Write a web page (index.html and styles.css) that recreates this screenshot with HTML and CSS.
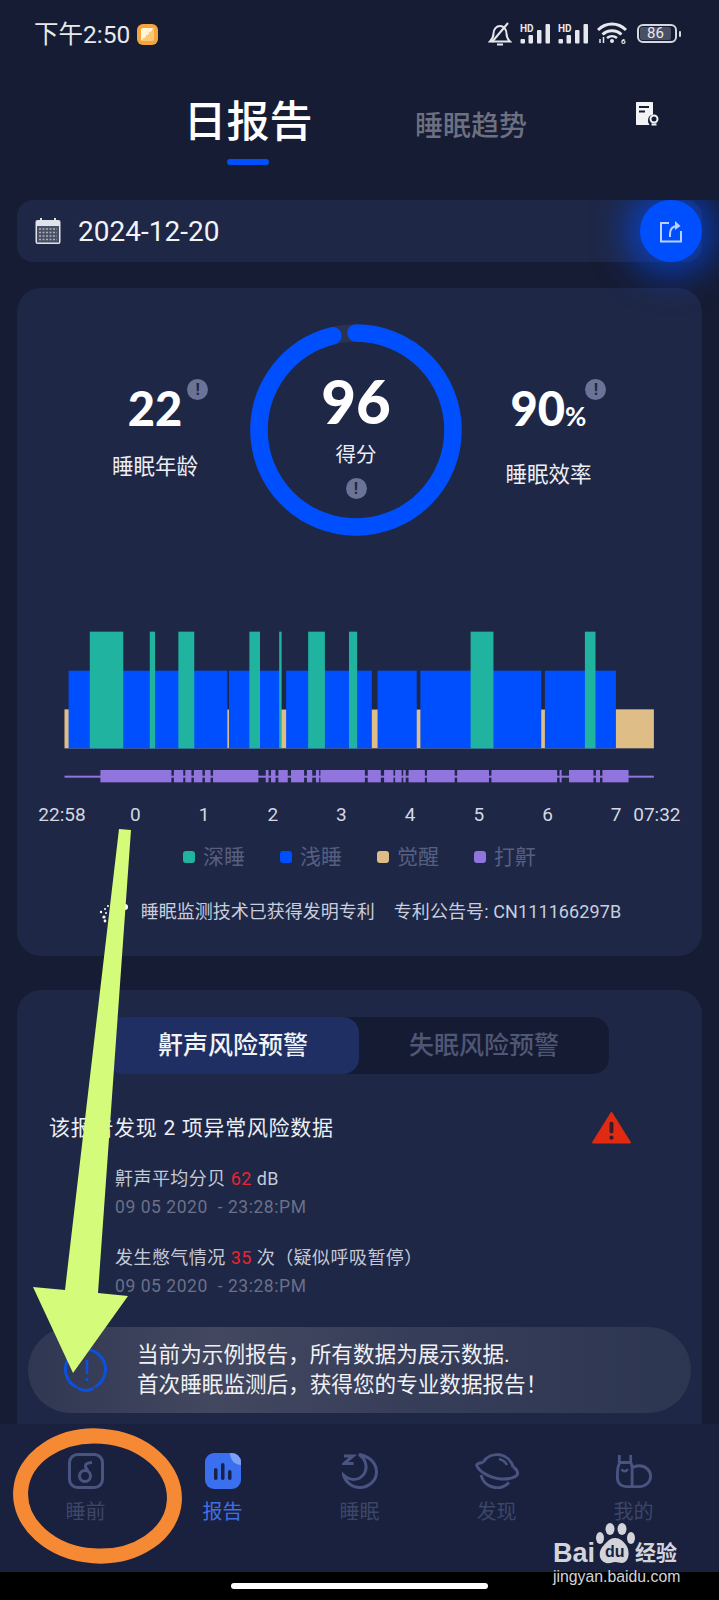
FILE: index.html
```html
<!DOCTYPE html>
<html lang="zh-CN">
<head>
    <meta charset="UTF-8">
    <meta name="viewport" content="width=device-width, initial-scale=1.0">
    <title>日报告</title>
    <link rel="stylesheet" href="styles.css">
</head>
<body>
    <div class="screen">
        <!-- Status bar -->
        <div class="status-bar">
            <div class="status-left">
                <span class="status-time">下午2:50</span>
                <span class="app-dot"><span class="app-dot-fold"></span></span>
            </div>
            <div class="status-right">
                <svg class="bell-icon" viewBox="0 0 24 24" fill="none" stroke="#e6e8ee" stroke-width="2">
                    <path d="M2 19.500h20c-2.500-2.500-3.500-4-3.500-8 0-4.500-3-7.500-6.500-7.500s-6.500 3-6.500 7.500c0 4-1 5.500-3.500 8z"/>
                    <path d="M9 22.500h6"/>
                    <path d="M20 1L4 20"/>
                </svg>
                <svg class="signal-icon" viewBox="0 0 31 21">
                    <text x="0" y="8.500" class="hd-text">HD</text>
                    <rect x="0.500" y="16" width="4.500" height="4.500" rx="1"/>
                    <rect x="8.500" y="12" width="4.500" height="8.500" rx="1"/>
                    <rect x="17" y="7" width="4.500" height="13.500" rx="1"/>
                    <rect x="25.500" y="1" width="4.500" height="19.500" rx="1"/>
                </svg>
                <svg class="signal-icon" viewBox="0 0 31 21">
                    <text x="0" y="8.500" class="hd-text">HD</text>
                    <rect x="0.500" y="16" width="4.500" height="4.500" rx="1"/>
                    <rect x="8.500" y="12" width="4.500" height="8.500" rx="1"/>
                    <rect x="17" y="7" width="4.500" height="13.500" rx="1"/>
                    <rect x="25.500" y="1" width="4.500" height="19.500" rx="1"/>
                </svg>
                <svg class="wifi-icon" viewBox="0 0 30 22" fill="none" stroke="#e6e8ee" stroke-width="3">
                    <path d="M1 8c8-8 20-8 28 0"/>
                    <path d="M5.500 12.500c5.500-5 13.500-5 19 0"/>
                    <path d="M10 16c3-2.500 7-2.500 10 0" stroke-width="2.500"/>
                    <circle cx="15" cy="19" r="2" fill="#e6e8ee" stroke="none"/>
                    <path d="M3 21v-4M6.500 21v-6" stroke-width="1.500"/>
                    <text x="24" y="21.500" class="wifi-six">6</text>
                </svg>
                <div class="battery">
                    <div class="battery-body"><span class="battery-level">86</span></div>
                    <span class="battery-nub"></span>
                </div>
            </div>
        </div>

        <!-- Page tabs -->
        <header class="page-tabs">
            <div class="page-tab-active">
                <h1>日报告</h1>
                <span class="tab-line"></span>
            </div>
            <div class="page-tab">睡眠趋势</div>
            <svg class="report-icon" viewBox="0 0 24 24">
                <path d="M1 0h15c.600 0 1 .400 1 1v11.500c-3 .500-5 2.500-5 5.500 0 2 .500 3.500 1.500 5H1c-.600 0-1-.400-1-1V1c0-.600.400-1 1-1z" fill="#f2f3f6"/>
                <rect x="3" y="4" width="10" height="2" fill="#161c33"/>
                <rect x="3" y="8.500" width="6" height="2" fill="#161c33"/>
                <circle cx="18" cy="17" r="3.500" fill="none" stroke="#f2f3f6" stroke-width="2"/>
                <rect x="15.500" y="21.500" width="5" height="2" fill="#f2f3f6"/>
            </svg>
        </header>

        <main class="content">
            <!-- Date bar -->
            <div class="date-bar">
                <svg class="calendar-icon" viewBox="0 0 26 26">
                    <rect x="0.500" y="2" width="25" height="24" rx="2" fill="#dfe2ea"/>
                    <rect x="2" y="8" width="22" height="16.500" fill="#4a5063"/>
                    <rect x="5" y="0" width="2" height="4" fill="#dfe2ea"/>
                    <rect x="19" y="0" width="2" height="4" fill="#dfe2ea"/>
                    <path d="M4 11h18M4 14.500h18M4 18h18M4 21.500h18" stroke="#a9aebd" stroke-width="1.500" stroke-dasharray="2 1.500"/>
                </svg>
                <span class="date-text">2024-12-20</span>
                <div class="share-btn">
                    <svg viewBox="0 0 24 24" fill="none" stroke="#bcd0ff" stroke-width="2">
                        <path d="M10 4H2v18.500h20V12"/>
                        <path d="M11 18v-3c0-5 3-8 8-8" />
                        <path d="M16 2l5.500 5-5.500 4" fill="#bcd0ff" stroke="none"/>
                    </svg>
                </div>
            </div>

            <!-- Score card -->
            <section class="card score-card">
                <div class="score-row">
                    <div class="stat">
                        <div class="stat-value">22<span class="info-badge stat-badge">!</span></div>
                        <div class="stat-label">睡眠年龄</div>
                    </div>
                    <div class="ring">
                        <svg viewBox="0 0 212 212" fill="none" stroke-width="17.500">
                            <circle cx="106" cy="106" r="97" stroke="#2a3450"/>
                            <circle cx="106" cy="106" r="97" stroke="#004fff" stroke-linecap="round" stroke-dasharray="585 610" transform="rotate(-90 106 106)"/>
                        </svg>
                        <div class="ring-text">
                            <div class="ring-score">96</div>
                            <div class="ring-label">得分</div>
                            <span class="info-badge">!</span>
                        </div>
                    </div>
                    <div class="stat">
                        <div class="stat-value">90<small>%</small><span class="info-badge stat-badge badge-right">!</span></div>
                        <div class="stat-label">睡眠效率</div>
                    </div>
                </div>

                <svg class="sleep-chart" viewBox="0 0 1568 495" preserveAspectRatio="none">
                    <g fill="#dfbd86">
                        <rect x="60" y="268" width="1444" height="117"/>
                    </g>
                    <g fill="#1e2746">
                        <rect x="70" y="152" width="1341" height="116"/>
                    </g>
                    <g fill="#004fff">
                        <rect x="70" y="152" width="389" height="233"/>
                        <rect x="463" y="152" width="127" height="233"/>
                        <rect x="603" y="152" width="210" height="233"/>
                        <rect x="827" y="152" width="96" height="233"/>
                        <rect x="932" y="152" width="296" height="233"/>
                        <rect x="1237" y="152" width="174" height="233"/>
                    </g>
                    <g fill="#1fb3a0">
                        <rect x="122" y="35" width="82" height="350"/>
                        <rect x="269" y="35" width="13" height="350"/>
                        <rect x="339" y="35" width="39" height="350"/>
                        <rect x="513" y="35" width="26" height="350"/>
                        <rect x="586" y="35" width="6" height="350"/>
                        <rect x="657" y="35" width="41" height="350"/>
                        <rect x="757" y="35" width="20" height="350"/>
                        <rect x="1055" y="35" width="56" height="350"/>
                        <rect x="1335" y="35" width="26" height="350"/>
                    </g>
                    <g fill="#9274de">
                        <rect x="60" y="467" width="1444" height="6"/>
                        <rect x="148" y="450" width="174" height="37"/>
                        <rect x="328" y="450" width="23" height="37"/>
                        <rect x="356" y="450" width="15" height="37"/>
                        <rect x="377" y="450" width="21" height="37"/>
                        <rect x="404" y="450" width="14" height="37"/>
                        <rect x="424" y="450" width="111" height="37"/>
                        <rect x="553" y="450" width="7" height="37"/>
                        <rect x="566" y="450" width="11" height="37"/>
                        <rect x="584" y="450" width="23" height="37"/>
                        <rect x="615" y="450" width="32" height="37"/>
                        <rect x="654" y="450" width="13" height="37"/>
                        <rect x="676" y="450" width="8" height="37"/>
                        <rect x="687" y="450" width="109" height="37"/>
                        <rect x="803" y="450" width="32" height="37"/>
                        <rect x="843" y="450" width="23" height="37"/>
                        <rect x="870" y="450" width="16" height="37"/>
                        <rect x="890" y="450" width="6" height="37"/>
                        <rect x="903" y="450" width="40" height="37"/>
                        <rect x="948" y="450" width="68" height="37"/>
                        <rect x="1022" y="450" width="78" height="37"/>
                        <rect x="1106" y="450" width="161" height="37"/>
                        <rect x="1273" y="450" width="5" height="37"/>
                        <rect x="1296" y="450" width="60" height="37"/>
                        <rect x="1362" y="450" width="10" height="37"/>
                        <rect x="1378" y="450" width="64" height="37"/>
                    </g>
                </svg>

                <div class="axis">
                    <span class="axis-start">22:58</span>
                    <span class="axis-tick">0</span>
                    <span class="axis-tick">1</span>
                    <span class="axis-tick">2</span>
                    <span class="axis-tick">3</span>
                    <span class="axis-tick">4</span>
                    <span class="axis-tick">5</span>
                    <span class="axis-tick">6</span>
                    <span class="axis-tick">7</span>
                    <span class="axis-end">07:32</span>
                </div>

                <div class="legend">
                    <div class="legend-item"><i class="swatch deep"></i>深睡</div>
                    <div class="legend-item"><i class="swatch light"></i>浅睡</div>
                    <div class="legend-item"><i class="swatch awake"></i>觉醒</div>
                    <div class="legend-item"><i class="swatch snore"></i>打鼾</div>
                </div>

                <div class="patent">
                    <svg class="spinner" viewBox="0 0 30 22" fill="#fff">
                        <circle cx="27" cy="6" r="3"/>
                        <circle cx="14" cy="4" r="1"/>
                        <circle cx="10" cy="5" r="1"/>
                        <circle cx="7" cy="8" r="1"/>
                        <circle cx="3" cy="11" r="1.200"/>
                        <circle cx="8" cy="12" r="1"/>
                        <circle cx="6" cy="16" r="1.600"/>
                        <circle cx="12" cy="15" r="1"/>
                        <circle cx="7" cy="20" r="1.400"/>
                    </svg>
                    <span>睡眠监测技术已获得发明专利</span>
                    <span class="patent-no">专利公告号: CN111166297B</span>
                </div>
            </section>

            <!-- Risk card, runs under the tab bar -->
            <section class="card risk-card">
                <div class="risk-tabs">
                    <div class="risk-tab active">鼾声风险预警</div>
                    <div class="risk-tab">失眠风险预警</div>
                </div>
                <div class="risk-head">
                    <span class="risk-summary">该报告发现 2 项异常风险数据</span>
                    <svg class="warn-icon" viewBox="0 0 40 33">
                        <path d="M20 1L39 31.500H1z" fill="#e02a12" stroke="#e02a12" stroke-width="2" stroke-linejoin="round"/>
                        <rect x="18" y="10" width="4" height="12" rx="2" fill="#3a1a2a"/>
                        <circle cx="20" cy="26.500" r="2.200" fill="#3a1a2a"/>
                    </svg>
                </div>
                <div class="risk-item">
                    <p class="risk-title">鼾声平均分贝 <em>62</em> dB</p>
                    <p class="risk-time">09 05 2020&nbsp; - 23:28:PM</p>
                </div>
                <div class="risk-item">
                    <p class="risk-title">发生憋气情况 <em>35</em> 次（疑似呼吸暂停）</p>
                    <p class="risk-time">09 05 2020&nbsp; - 23:28:PM</p>
                </div>
            </section>
        </main>

        <!-- Bottom navigation -->
        <nav class="tab-bar">
            <div class="tab-item">
                <svg viewBox="0 0 36 36" fill="none" stroke="#4a5480" stroke-width="3">
                    <rect x="1.500" y="1.500" width="33" height="33" rx="8"/>
                    <circle cx="17" cy="23" r="5.500"/>
                    <path d="M20 18C17 14 15 10 24 9.500"/>
                </svg>
                <span>睡前</span>
            </div>
            <div class="tab-item current">
                <svg viewBox="0 0 36 36">
                    <rect width="36" height="36" rx="9" fill="#3a6ff0"/>
                    <path d="M25 0h2a9 9 0 0 1 9 9v3c-6 0-11-5-11-12z" fill="#7d9ff5"/>
                    <rect x="9" y="15" width="3.500" height="12" rx="1.700" fill="#16224a"/>
                    <rect x="16" y="10" width="3.500" height="17" rx="1.700" fill="#16224a"/>
                    <rect x="23" y="17" width="3.500" height="10" rx="1.700" fill="#16224a"/>
                </svg>
                <span>报告</span>
            </div>
            <div class="tab-item">
                <svg viewBox="0 0 36 36" fill="none" stroke="#4a5480" stroke-width="3">
                    <path d="M17 1.500C27 3 34.500 10 34.500 19 34.500 27.500 27 34.500 18 34.500 10 34.500 3.500 29 1.500 22 8 28 17 28 22 21 26 15 24 6 17 1.500z"/>
                    <path d="M2 3h9L2 10.500h9.500"/>
                </svg>
                <span>睡眠</span>
            </div>
            <div class="tab-item">
                <svg class="planet" viewBox="0 0 44 36" fill="none" stroke="#4a5480" stroke-width="3">
                    <path d="M8 9.500A16.500 16.500 0 0 1 38 14"/>
                    <path d="M8 9.500C3 10 1 11 2 13C4 18 14 25 26 26C34 26.500 42 24 42.500 21C43 19 41 15 38 14"/>
                    <path d="M6 22A16.500 16.500 0 0 0 34 29.500"/>
                    <path d="M24 6c4 1 6.500 3 8 6" stroke-width="2.500"/>
                </svg>
                <span>发现</span>
            </div>
            <div class="tab-item">
                <svg viewBox="0 0 38 36" fill="none" stroke="#4a5480" stroke-width="3">
                    <path d="M3.500 1v9C2 13 1.500 16 1.500 20v5c0 6 4 9.500 9 9.500h14c7 0 12-5 12-11s-5-11-12-11c-2 0-5 .500-7.500 2"/>
                    <path d="M15.500 1v8"/>
                    <path d="M3.500 9h12c1 2 1.500 3 1.500 5v20.500"/>
                    <path d="M6 16c1 3 5 3 6.500 0" stroke-width="2.500"/>
                </svg>
                <span>我的</span>
            </div>
        </nav>
        <div class="home-bar"><span></span></div>

        <!-- Notice floats over the risk card -->
        <div class="notice">
            <svg class="notice-icon" viewBox="0 0 46 46" fill="none" stroke="#0c50e0" stroke-width="3">
                <path d="M31 40A20 20 0 1 0 13 40.500"/>
                <path d="M14 41c5 3 11 3 16 0" stroke-width="3"/>
                <path d="M23 13v14M23 31v3" stroke-width="2.500"/>
            </svg>
            <p>当前为示例报告，所有数据为展示数据.<br>首次睡眠监测后，获得您的专业数据报告！</p>
        </div>

        <!-- Annotations drawn on top of the screenshot -->
        <svg class="annotations" viewBox="0 0 719 1600">
            <polygon points="119,829 131,830 98,1293 128,1296 73,1373 33,1287 65,1290" fill="#d4fb79"/>
            <ellipse cx="97.500" cy="1496" rx="77" ry="60" fill="none" stroke="#f68a34" stroke-width="15" transform="rotate(4 97.500 1496)"/>
        </svg>

        <!-- Watermark -->
        <div class="watermark">
            <div class="wm-top">
                <span class="wm-bai">Bai</span>
                <div class="wm-paw">
                    <svg viewBox="0 0 40 44" fill="#d3d4da">
                        <ellipse cx="5" cy="15" rx="4" ry="6"/>
                        <ellipse cx="15" cy="6" rx="4.500" ry="6"/>
                        <ellipse cx="27" cy="6" rx="4.500" ry="6"/>
                        <ellipse cx="36" cy="15" rx="4" ry="6"/>
                        <path d="M20 15c5 0 8 3 11 7 4 5 4 17-4 18-3 0-4-1-7-1s-5 2-9 1c-8-2-8-13-2-18 4-4 6-7 11-7z"/>
                    </svg>
                    <span>du</span>
                </div>
                <span class="wm-jy">经验</span>
            </div>
            <div class="wm-url">jingyan.baidu.com</div>
        </div>
    </div>
</body>
</html>
```

FILE: styles.css
```css
* {
    margin: 0;
    padding: 0;
    box-sizing: border-box;
    font-family: 'Roboto', 'Noto Sans CJK SC', sans-serif;
}
body {
    background-color: #000;
}
.screen {
    position: relative;
    width: 719px;
    height: 1600px;
    overflow: hidden;
    background-color: #161c33;
    display: flex;
    flex-direction: column;
    color: #fff;
}

/* status bar */
.status-bar {
    height: 66px;
    flex: none;
    display: flex;
    justify-content: space-between;
    padding: 19px 38px 0 34px;
}
.status-left {
    display: flex;
    align-items: flex-start;
    gap: 7px;
    margin-top: 2px;
}
.status-time {
    font-size: 24.5px;
    line-height: 28px;
    color: #e8e9ee;
}
.app-dot {
    width: 21px;
    height: 21px;
    margin-top: 3px;
    border-radius: 6px;
    background-color: #f4a53c;
    display: block;
    padding: 4px;
}
.app-dot-fold {
    display: block;
    width: 13px;
    height: 13px;
    border-radius: 2px;
    background: linear-gradient(135deg, #fff3d8 50%, #f9c977 50%);
}
.status-right {
    display: flex;
    align-items: flex-start;
    height: 28px;
}
.bell-icon {
    width: 24px;
    height: 24px;
    margin: 3px 8px 0 0;
}
.signal-icon {
    width: 31px;
    height: 21px;
    margin: 4px 7px 0 0;
    fill: #e6e8ee;
}
.hd-text {
    font-size: 10px;
    font-weight: 700;
}
.wifi-icon {
    width: 30px;
    height: 22px;
    margin: 3px 10px 0 1px;
}
.wifi-six {
    font-size: 8px;
    font-weight: 700;
    fill: #e6e8ee;
    stroke: none;
}
.battery {
    display: flex;
    align-items: center;
    gap: 2px;
    height: 19px;
    margin-top: 5px;
}
.battery-body {
    width: 40px;
    height: 19px;
    border: 2px solid #d6d8e0;
    border-radius: 6px;
    padding: 1px;
}
.battery-level {
    display: block;
    width: 31px;
    height: 13px;
    background-color: #4a4f63;
    border-radius: 2px;
    font-size: 15px;
    line-height: 13px;
    text-align: center;
    color: #e8e9ee;
}
.battery-nub {
    width: 2px;
    height: 6px;
    border-radius: 1px;
    background-color: #d6d8e0;
}

/* page tabs */
.page-tabs {
    position: relative;
    height: 134px;
    flex: none;
    display: flex;
    padding-left: 185px;
}
.page-tab-active {
    width: 126px;
    padding-top: 31px;
    display: flex;
    flex-direction: column;
    align-items: center;
}
.page-tab-active h1 {
    font-size: 43px;
    font-weight: 500;
    line-height: 50px;
    white-space: nowrap;
}
.tab-line {
    width: 42px;
    height: 6px;
    margin-top: 12px;
    border-radius: 3px;
    background-color: #004fff;
}
.page-tab {
    margin: 43px 0 0 104px;
    font-size: 28px;
    font-weight: 500;
    line-height: 36px;
    color: #6c7080;
}
.report-icon {
    position: absolute;
    left: 636px;
    top: 36px;
    width: 24px;
    height: 24px;
}

/* content */
.content {
    flex: 1;
    min-height: 0;
    overflow: hidden;
    padding: 0 17px;
}
.date-bar {
    height: 62px;
    display: flex;
    align-items: center;
    border-radius: 16px;
    background-color: #1e2746;
    padding-left: 18px;
}
.calendar-icon {
    width: 26px;
    height: 26px;
}
.date-text {
    margin-left: 17px;
    font-size: 28px;
    color: #f2f3f6;
}
.share-btn {
    margin-left: auto;
    width: 62px;
    height: 62px;
    border-radius: 50%;
    background-color: #004fff;
    box-shadow: 0 0 34px 14px rgba(0, 79, 255, 0.6);
    display: flex;
    align-items: center;
    justify-content: center;
}
.share-btn svg {
    width: 24px;
    height: 24px;
}
.card {
    border-radius: 24px;
    background-color: #1e2746;
}
.score-card {
    margin-top: 26px;
    padding: 36px 0 32px;
    overflow: hidden;
}
.score-row {
    display: grid;
    grid-template-columns: 190px 212px 173px;
    padding-left: 43px;
}
.stat {
    padding-top: 61px;
    text-align: center;
}
.stat-value {
    position: relative;
    display: inline-block;
    font-family: 'Lato', sans-serif;
    font-size: 47px;
    font-weight: 900;
    line-height: 46px;
}
.stat-value small {
    font-family: 'Lato', sans-serif;
    font-size: 26px;
    font-weight: 700;
}
.stat-label {
    margin-top: 24px;
    font-size: 21.5px;
    line-height: 24px;
    color: #eceef3;
}
.info-badge {
    display: block;
    width: 21px;
    height: 21px;
    border-radius: 50%;
    background-color: #6b7396;
    color: #1e2746;
    font-family: 'Roboto', sans-serif;
    font-size: 16px;
    font-weight: 700;
    line-height: 21px;
    text-align: center;
}
.stat-badge {
    position: absolute;
    right: -26px;
    top: -6px;
}
.badge-right {
    right: -20px;
}
.ring {
    position: relative;
    width: 212px;
    height: 212px;
}
.ring svg {
    display: block;
    width: 212px;
    height: 212px;
}
.ring-text {
    position: absolute;
    inset: 0;
    padding-top: 47px;
    display: flex;
    flex-direction: column;
    align-items: center;
}
.ring-score {
    font-family: 'Lato', sans-serif;
    font-size: 60px;
    font-weight: 900;
    line-height: 60px;
}
.ring-label {
    margin-top: 12px;
    font-size: 20.5px;
    line-height: 24px;
    color: #eceef3;
}
.ring-text .info-badge {
    margin-top: 11px;
}

/* sleep chart */
.sleep-chart {
    display: block;
    width: 640px;
    height: 165px;
    margin: 84px 0 0 23px;
}
.axis {
    display: flex;
    margin-top: 19px;
    padding-left: 21px;
    font-size: 19px;
    line-height: 22px;
    color: #d5d8e2;
}
.axis-start, .axis-end {
    flex: none;
    width: 48px;
    text-align: center;
}
.axis-start {
    margin-right: 15px;
}
.axis-tick {
    flex: none;
    width: 68.7px;
    text-align: center;
}
.axis-end {
    margin-left: -17.6px;
}
.legend {
    display: flex;
    justify-content: center;
    gap: 35px;
    margin-top: 19px;
}
.legend-item {
    display: flex;
    align-items: center;
    gap: 8px;
    font-size: 21px;
    line-height: 24px;
    color: #565f80;
}
.swatch {
    width: 12px;
    height: 12px;
    border-radius: 3px;
}
.deep { background-color: #1fb3a0; }
.light { background-color: #004fff; }
.awake { background-color: #dfbd86; }
.snore { background-color: #9274de; }
.patent {
    display: flex;
    justify-content: center;
    align-items: center;
    gap: 19px;
    margin-top: 31px;
    font-size: 18px;
    line-height: 24px;
    color: #c9cede;
}
.patent-no {
    letter-spacing: 0.1px;
}
.spinner {
    width: 30px;
    height: 22px;
    margin-right: -6px;
}

/* risk card */
.risk-card {
    height: 460px;
    margin-top: 34px;
    padding-top: 27px;
}
.risk-tabs {
    width: 502px;
    height: 57px;
    margin-left: 90px;
    display: flex;
    border-radius: 16px;
    background-color: #151b32;
}
.risk-tab {
    flex: none;
    width: 250px;
    border-radius: 16px;
    font-size: 25px;
    font-weight: 500;
    line-height: 57px;
    text-align: center;
    color: #4f5775;
}
.risk-tab.active {
    width: 252px;
    background-color: #1f2f63;
    color: #f2f3f6;
}
.risk-head {
    display: flex;
    justify-content: space-between;
    align-items: center;
    height: 32px;
    margin-top: 38px;
    padding: 0 71px 0 32px;
    font-size: 21px;
    letter-spacing: 0.7px;
    color: #eceef3;
}
.risk-summary {
    padding-bottom: 4px;
}
.warn-icon {
    width: 39px;
    height: 32px;
}
.risk-item {
    margin: 22px 0 0 98px;
}
.risk-item + .risk-item {
    margin-top: 26px;
}
.risk-title {
    font-size: 18px;
    letter-spacing: 0.45px;
    line-height: 26px;
    color: #c5c9d6;
}
.risk-title em {
    font-style: normal;
    color: #e8252f;
}
.risk-time {
    margin-top: 3px;
    font-size: 17.5px;
    letter-spacing: 0.55px;
    line-height: 24px;
    color: #6a7088;
}

/* bottom nav */
.tab-bar {
    position: relative;
    height: 148px;
    flex: none;
    display: grid;
    grid-template-columns: repeat(5, 137px);
    padding: 29px 0 0 17px;
    background-color: #19213f;
}
.tab-item {
    display: flex;
    flex-direction: column;
    align-items: center;
    font-size: 20px;
    line-height: 24px;
    color: #3d4668;
}
.tab-item svg {
    width: 36px;
    height: 36px;
    margin-bottom: 11px;
}
.tab-item svg.planet {
    width: 44px;
}
.tab-item.current {
    color: #3f6ee8;
}
.home-bar {
    height: 28px;
    flex: none;
    background-color: #000;
    padding: 11px 0 0 231px;
}
.home-bar span {
    display: block;
    width: 257px;
    height: 6px;
    border-radius: 3px;
    background-color: #fff;
}

/* floating notice */
.notice {
    position: absolute;
    left: 28px;
    top: 1327px;
    width: 663px;
    height: 86px;
    border-radius: 43px;
    background: linear-gradient(90deg, #303752 0%, #434860 28%, #363d58 60%, #2d3651 100%);
    display: flex;
    align-items: center;
    padding-left: 36px;
}
.notice-icon {
    width: 46px;
    height: 46px;
    flex: none;
}
.notice p {
    margin-left: 27px;
    font-size: 21.6px;
    line-height: 30px;
    color: #f0f1f5;
}

/* annotations + watermark */
.annotations {
    position: absolute;
    left: 0;
    top: 0;
    width: 719px;
    height: 1600px;
    pointer-events: none;
}
.watermark {
    position: absolute;
    left: 553px;
    top: 1523px;
    width: 130px;
    color: #d3d4da;
}
.wm-top {
    display: flex;
    align-items: flex-end;
    height: 44px;
}
.wm-bai {
    font-family: 'Liberation Sans', sans-serif;
    font-size: 27px;
    font-weight: 700;
    line-height: 27px;
}
.wm-paw {
    position: relative;
    width: 40px;
    height: 44px;
    flex: none;
}
.wm-paw svg {
    display: block;
    width: 40px;
    height: 44px;
}
.wm-paw span {
    position: absolute;
    left: 10px;
    top: 20px;
    font-family: 'Liberation Sans', sans-serif;
    font-size: 16px;
    font-weight: 700;
    line-height: 18px;
    color: #19213f;
}
.wm-jy {
    font-size: 21px;
    font-weight: 700;
    line-height: 27px;
}
.wm-url {
    font-family: 'Liberation Sans', sans-serif;
    font-size: 15.8px;
    line-height: 20px;
    white-space: nowrap;
}
```
